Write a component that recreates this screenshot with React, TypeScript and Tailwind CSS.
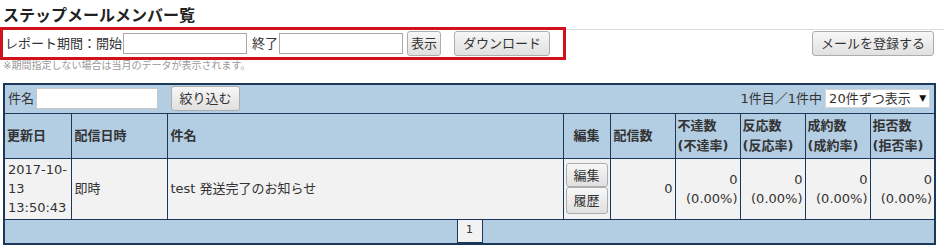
const font = "font-['DejaVu_Sans','Noto_Sans_CJK_JP',sans-serif]"

function Btn({ children, className = '' }: { children: React.ReactNode; className?: string }) {
  return (
    <button
      className={`flex items-center justify-center rounded-[3px] border border-[#adadad] bg-gradient-to-b from-[#f7f7f7] to-[#e0e0e0] text-[13px] text-[#333] ${className}`}
    >
      {children}
    </button>
  )
}

const cols = ['w-[67px]', 'w-[96px]', 'w-[396px]', 'w-[47px]', 'w-[65px]', 'w-[65px]', 'w-[65px]', 'w-[65px]', 'w-[65px]']

export default function App() {
  const rates = ['不達', '反応', '成約', '拒否']
  return (
    <div className={`w-[944px] h-[252px] bg-white text-[#333] ${font}`}>
      {/* Title */}
      <div className="h-[30px] border-b border-[#dcdcdc] pl-[3px] pt-[5px]">
        <h1 className="text-[16px] font-bold leading-[22px] text-[#222]">ステップメールメンバー覧</h1>
      </div>

      {/* Period row */}
      <div className="-mt-[3px] flex items-start justify-between">
        <div className="flex h-[33px] items-center border-[3px] border-[#d0121b] pl-[2px] pr-[13px] text-[13px]">
          <span>レポート期間：開始</span>
          <input className="ml-[1px] h-[21px] w-[124px] border border-[#a9a9a9] bg-white" />
          <span className="ml-[5px]">終了</span>
          <input className="ml-[1px] h-[21px] w-[124px] border border-[#a9a9a9] bg-white" />
          <Btn className="ml-[4px] h-[25px] w-[34px]">表示</Btn>
          <Btn className="ml-[13px] h-[25px] w-[96px]">ダウンロード</Btn>
        </div>
        <Btn className="mr-[10px] mt-[4px] h-[25px] w-[122px]">メールを登録する</Btn>
      </div>
      <p className="pl-[3px] text-[10px] leading-[12px] text-[#999]">※期間指定しない場合は当月のデータが表示されます。</p>

      {/* Table */}
      <table className="ml-[3px] mt-[11px] w-[931px] table-fixed border-collapse border-2 border-[#1b3858] text-[13px]">
        <colgroup>
          {cols.map((c, i) => (
            <col key={i} className={c} />
          ))}
        </colgroup>
        <tbody>
          <tr className="h-[29px] bg-[#b3cde3]">
            <td colSpan={9} className="px-[2px]">
              <div className="flex items-center justify-between">
                <div className="flex items-center">
                  <span className="pl-[1px]">件名</span>
                  <input className="ml-[2px] h-[21px] w-[122px] border border-[#c8c8c8] bg-white" />
                  <Btn className="ml-[13px] h-[25px] w-[69px]">絞り込む</Btn>
                </div>
                <div className="flex items-center">
                  <span>1件目／1件中</span>
                  <div className="ml-[3px] mr-[2px] flex h-[19px] w-[105px] items-center justify-between border border-[#d5d5d5] bg-white px-[3px] text-[13px]">
                    <span>20件ずつ表示</span>
                    <span className="text-[9px] text-[#111]">▼</span>
                  </div>
                </div>
              </div>
            </td>
          </tr>
          <tr className="h-[45px] bg-[#b3cde3] font-bold leading-[20px]">
            <th className="border border-[#1b3858] pl-[2px] text-left">更新日</th>
            <th className="border border-[#1b3858] pl-[3px] text-left">配信日時</th>
            <th className="border border-[#1b3858] pl-[3px] text-left">件名</th>
            <th className="border border-[#1b3858] text-center">編集</th>
            <th className="border border-[#1b3858] pl-[3px] text-left">配信数</th>
            {rates.map((r) => (
              <th key={r} className="border border-[#1b3858] pl-[2px] text-left">
                {r}数
                <br />({r}率)
              </th>
            ))}
          </tr>
          <tr className="h-[61px] bg-[#f2f2f2] leading-[19px]">
            <td className="border border-[#1b3858] pl-[3px]">
              2017-10-
              <br />
              13
              <br />
              13:50:43
            </td>
            <td className="border border-[#1b3858] pl-[3px]">即時</td>
            <td className="border border-[#1b3858] pl-[3px]">test 発送完了のお知らせ</td>
            <td className="border border-[#1b3858] px-[1px]">
              <div className="flex flex-col items-center">
                <Btn className="h-[24px] w-[42px]">編集</Btn>
                <Btn className="h-[27px] w-[42px]">履歴</Btn>
              </div>
            </td>
            <td className="border border-[#1b3858] pr-[2px] text-right">0</td>
            {rates.map((r) => (
              <td key={r} className="border border-[#1b3858] pr-[2px] text-right">
                0
                <br />
                (0.00%)
              </td>
            ))}
          </tr>
          <tr className="h-[24px] bg-[#b3cde3]">
            <td colSpan={9} className="border border-[#1b3858] p-0">
              <div className="flex justify-center">
                <span className="flex h-[23px] w-[26px] items-center justify-center border-x border-b border-[#1b3858] bg-[#f2f2f2] text-[11px]">
                  1
                </span>
              </div>
            </td>
          </tr>
        </tbody>
      </table>
    </div>
  )
}
